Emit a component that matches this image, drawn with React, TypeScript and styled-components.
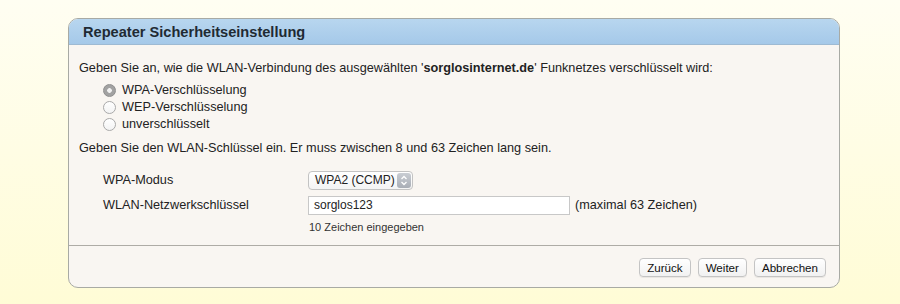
import React from "react";
import styled, { createGlobalStyle } from "styled-components";

const GlobalStyle = createGlobalStyle`
  html, body {
    margin: 0;
    padding: 0;
  }
  body {
    min-height: 304px;
    background: linear-gradient(to bottom, #fffef2 0%, #fffcd6 100%);
    font-family: "Liberation Sans", Arial, sans-serif;
    color: #222;
  }
`;

const Page = styled.div`
  padding: 18px 0 0 68px;
`;

const Panel = styled.div`
  width: 770px;
  border: 1px solid #a8aaa4;
  border-radius: 10px;
  background: #f9f6f2;
  overflow: hidden;
  display: flex;
  flex-direction: column;
`;

const Header = styled.div`
  height: 25px;
  background: linear-gradient(to bottom, #b8d6ef 0%, #a5c9e9 100%);
  border-bottom: 1px solid #9ebad3;
  padding-left: 14px;
  display: flex;
  align-items: center;
  font-size: 14.6px;
  font-weight: bold;
  color: #1f2a33;
`;

const Body = styled.div`
  padding: 15px 10px 11px 10px;
  font-size: 12.7px;
  line-height: 17px;
  border-bottom: 1px solid #aeaca6;
`;

const Text = styled.div<{ $gap?: number }>`
  margin-top: ${(p) => p.$gap ?? 0}px;
`;

const RadioList = styled.div`
  margin: 5px 0 0 24px;
  display: flex;
  flex-direction: column;
`;

const RadioRow = styled.label`
  display: flex;
  align-items: center;
  gap: 6px;
  height: 17px;
`;

const RadioDot = styled.span<{ $checked?: boolean }>`
  width: 13px;
  height: 13px;
  border-radius: 50%;
  box-sizing: border-box;
  border: 1px solid ${(p) => (p.$checked ? "#8e8e8e" : "#a9a9a9")};
  background: ${(p) =>
    p.$checked
      ? "radial-gradient(circle, #f2f2f2 0 2px, #a2a2a2 2.6px)"
      : "linear-gradient(#ffffff, #f3f3f3)"};
`;

const Form = styled.div`
  margin: 14px 0 0 24px;
  display: grid;
  grid-template-columns: 205px auto;
  row-gap: 6px;
  align-items: center;
`;

const Label = styled.div`
  font-size: 12.7px;
`;

const Field = styled.div`
  display: flex;
  align-items: center;
  gap: 5px;
`;

const Select = styled.div`
  width: 105px;
  height: 19px;
  box-sizing: border-box;
  border: 1px solid #c3c3c3;
  border-radius: 4px;
  background: linear-gradient(#ffffff, #f4f4f4);
  display: flex;
  align-items: center;
  justify-content: space-between;
  padding: 0 1px 0 6px;
  font-size: 12px;
`;

const Stepper = styled.span`
  width: 14px;
  height: 15px;
  border-radius: 3px;
  background: linear-gradient(#c9cdd3, #a9aeb6);
  display: flex;
  align-items: center;
  justify-content: center;
`;

const Input = styled.div`
  width: 262px;
  height: 19px;
  box-sizing: border-box;
  border: 1px solid #c8c8c8;
  background: #fff;
  padding: 0 5px;
  display: flex;
  align-items: center;
  font-size: 12px;
`;

const Hint = styled.div`
  grid-column: 2;
  font-size: 11px;
  line-height: 14px;
  margin-top: -1px;
  padding-left: 1px;
  color: #333;
`;

const Footer = styled.div`
  height: 41px;
  display: flex;
  justify-content: flex-end;
  align-items: flex-start;
  gap: 7px;
  padding: 12px 13px 0 0;
  box-sizing: border-box;
`;

const Button = styled.button`
  height: 19px;
  padding: 0 7px;
  border: 1px solid #c4c4c4;
  border-radius: 4px;
  background: linear-gradient(#ffffff, #f1f1f1);
  font-family: "Liberation Sans", Arial, sans-serif;
  font-size: 11.6px;
  color: #111;
  box-shadow: 0 1px 0 rgba(0, 0, 0, 0.06);
`;

const StepperIcon = () => (
  <svg width="8" height="11" viewBox="0 0 8 11">
    <path d="M1.5 4 L4 1.5 L6.5 4" fill="none" stroke="#fff" strokeWidth="1.3" />
    <path d="M1.5 7 L4 9.5 L6.5 7" fill="none" stroke="#fff" strokeWidth="1.3" />
  </svg>
);

export default function App() {
  return (
    <>
      <GlobalStyle />
      <Page>
        <Panel>
          <Header>Repeater Sicherheitseinstellung</Header>
          <Body>
            <Text>
              Geben Sie an, wie die WLAN-Verbindung des ausgewählten '
              <b>sorglosinternet.de</b>' Funknetzes verschlüsselt wird:
            </Text>
            <RadioList>
              <RadioRow>
                <RadioDot $checked />
                WPA-Verschlüsselung
              </RadioRow>
              <RadioRow>
                <RadioDot />
                WEP-Verschlüsselung
              </RadioRow>
              <RadioRow>
                <RadioDot />
                unverschlüsselt
              </RadioRow>
            </RadioList>
            <Text $gap={7}>
              Geben Sie den WLAN-Schlüssel ein. Er muss zwischen 8 und 63 Zeichen lang sein.
            </Text>
            <Form>
              <Label>WPA-Modus</Label>
              <Field>
                <Select>
                  WPA2 (CCMP)
                  <Stepper>
                    <StepperIcon />
                  </Stepper>
                </Select>
              </Field>
              <Label>WLAN-Netzwerkschlüssel</Label>
              <Field>
                <Input>sorglos123</Input>
                (maximal 63 Zeichen)
              </Field>
              <Hint>10 Zeichen eingegeben</Hint>
            </Form>
          </Body>
          <Footer>
            <Button>Zurück</Button>
            <Button>Weiter</Button>
            <Button>Abbrechen</Button>
          </Footer>
        </Panel>
      </Page>
    </>
  );
}
